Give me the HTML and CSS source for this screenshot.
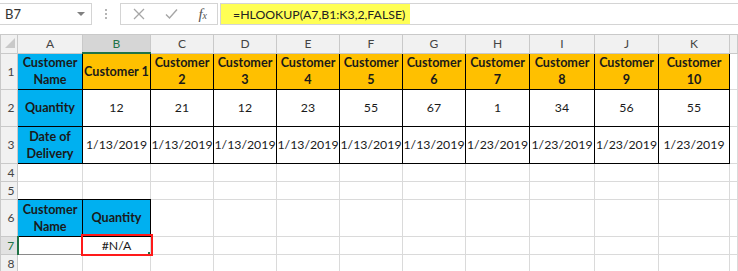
FILE: index.html
```html
<!DOCTYPE html>
<html lang="en">
<head>
    <meta charset="UTF-8">
    <title>HLOOKUP example</title>
    <link rel="stylesheet" href="styles.css">
</head>
<body>

    <div class="toolbar">
        <div class="namebox">
            <span class="ref">B7</span>
            <span class="caret"></span>
        </div>
        <div class="grip"><i></i><i></i><i></i></div>
        <div class="fx-buttons">
            <svg width="12" height="12" viewBox="0 0 12 12"><path d="M1 1L11 11M11 1L1 11" stroke="#a6a6a6" stroke-width="1.3" fill="none"/></svg>
            <svg width="13" height="12" viewBox="0 0 13 12"><path d="M1 6.5L4.5 10L12 1.5" stroke="#a6a6a6" stroke-width="1.4" fill="none"/></svg>
            <span class="fx">f<small>x</small></span>
        </div>
        <div class="formula">
            <span class="highlight">=HLOOKUP(A7,B1:K3,2,FALSE)</span>
        </div>
    </div>

    <table class="sheet">
        <colgroup>
            <col style="width:17px">
            <col style="width:65px">
            <col style="width:68px">
            <col style="width:63px">
            <col style="width:63px">
            <col style="width:63px">
            <col style="width:63px">
            <col style="width:63px">
            <col style="width:64px">
            <col style="width:65px">
            <col style="width:64px">
            <col style="width:71px">
            <col>
        </colgroup>
        <tr class="r-head">
            <th class="corner"><svg width="10" height="10" viewBox="0 0 10 10"><path d="M10 0V10H0Z" fill="#c9c9c9"/></svg></th>
            <th>A</th><th class="sel-col">B</th><th>C</th><th>D</th><th>E</th><th>F</th>
            <th>G</th><th>H</th><th>I</th><th>J</th><th>K</th><th></th>
        </tr>
        <tr class="r-tall">
            <th class="rownum">1</th>
            <td class="b blue bold">Customer<br>Name</td>
            <td class="b gold bold">Customer 1</td>
            <td class="b gold bold">Customer<br>2</td>
            <td class="b gold bold">Customer<br>3</td>
            <td class="b gold bold">Customer<br>4</td>
            <td class="b gold bold">Customer<br>5</td>
            <td class="b gold bold">Customer<br>6</td>
            <td class="b gold bold">Customer<br>7</td>
            <td class="b gold bold">Customer<br>8</td>
            <td class="b gold bold">Customer<br>9</td>
            <td class="b gold bold">Customer<br>10</td>
            <td></td>
        </tr>
        <tr class="r-tall2">
            <th class="rownum">2</th>
            <td class="b blue bold">Quantity</td>
            <td class="b">12</td><td class="b">21</td><td class="b">12</td><td class="b">23</td><td class="b">55</td>
            <td class="b">67</td><td class="b">1</td><td class="b">34</td><td class="b">56</td><td class="b">55</td>
            <td></td>
        </tr>
        <tr class="r-tall2">
            <th class="rownum">3</th>
            <td class="b blue bold">Date of<br>Delivery</td>
            <td class="b">1/13/2019</td><td class="b">1/13/2019</td><td class="b">1/13/2019</td><td class="b">1/13/2019</td><td class="b">1/13/2019</td>
            <td class="b">1/13/2019</td><td class="b">1/23/2019</td><td class="b">1/23/2019</td><td class="b">1/23/2019</td><td class="b">1/23/2019</td>
            <td></td>
        </tr>
        <tr class="r-low">
            <th class="rownum">4</th>
            <td></td><td></td><td></td><td></td><td></td><td></td><td></td><td></td><td></td><td></td><td></td><td></td>
        </tr>
        <tr class="r-low">
            <th class="rownum">5</th>
            <td class="b-under"></td><td class="b-under"></td><td></td><td></td><td></td><td></td><td></td><td></td><td></td><td></td><td></td><td></td>
        </tr>
        <tr class="r-tall2">
            <th class="rownum">6</th>
            <td class="b blue bold">Customer<br>Name</td>
            <td class="b blue bold">Quantity</td>
            <td></td><td></td><td></td><td></td><td></td><td></td><td></td><td></td><td></td><td></td>
        </tr>
        <tr class="r-low">
            <th class="rownum sel-row">7</th>
            <td class="lookup"></td>
            <td class="active">#N/A</td>
            <td></td><td></td><td></td><td></td><td></td><td></td><td></td><td></td><td></td><td></td>
        </tr>
        <tr class="r-low">
            <th class="rownum">8</th>
            <td></td><td></td><td></td><td></td><td></td><td></td><td></td><td></td><td></td><td></td><td></td><td></td>
        </tr>
    </table>

</body>
</html>
```

FILE: styles.css
```css
body {
    margin: 0;
    background: #ffffff;
    font-family: 'Lato', 'Liberation Sans', sans-serif;
    color: #1a1a1a;
    overflow: hidden;
}

/* formula bar */
.toolbar {
    display: flex;
    height: 34px;
    padding-top: 3px;
    box-sizing: border-box;
    background: #ffffff;
}

.namebox {
    width: 92px;
    height: 22px;
    box-sizing: border-box;
    border: 1px solid #d4d4d4;
    border-left: none;
    display: flex;
    align-items: center;
    justify-content: space-between;
    padding: 0 6px 0 5px;
}

.ref {
    font-size: 13px;
    color: #333333;
}

.caret {
    width: 0;
    height: 0;
    border-left: 4px solid transparent;
    border-right: 4px solid transparent;
    border-top: 4px solid #808080;
}

.grip {
    width: 28px;
    display: flex;
    flex-direction: column;
    align-items: center;
    justify-content: center;
    gap: 2px;
    height: 22px;
}

.grip i {
    display: block;
    width: 2px;
    height: 2px;
    background: #b5b5b5;
}

.fx-buttons {
    width: 98px;
    height: 22px;
    box-sizing: border-box;
    border: 1px solid #d4d4d4;
    display: flex;
    align-items: center;
    justify-content: space-between;
    padding: 0 10px 0 12px;
}

.fx {
    font-family: 'Liberation Serif', serif;
    font-style: italic;
    font-size: 15px;
    color: #555555;
}

.fx small {
    font-size: 10px;
}

.formula {
    flex: 1;
    height: 22px;
    margin-left: 2px;
    box-sizing: border-box;
    border: 1px solid #d4d4d4;
    border-right: none;
    display: flex;
    align-items: stretch;
}

.highlight {
    background: #ffff55;
    padding: 0 5px 0 12px;
    font-size: 12.3px;
    line-height: 21px;
    color: #222222;
}

/* grid */
.sheet {
    border-collapse: collapse;
    table-layout: fixed;
    width: 738px;
}

.sheet th,
.sheet td {
    border: 1px solid #dadada;
    padding: 0;
    text-align: center;
    vertical-align: middle;
    white-space: nowrap;
    overflow: hidden;
    font-size: 12.3px;
    line-height: 17px;
    color: #1a1a1a;
}

.sheet th {
    background: #f1f1f1;
    color: #444444;
    font-weight: normal;
    font-size: 12px;
    border-color: #c9c9c9;
}

.r-head { height: 18px; }
.r-tall { height: 36px; }
.r-tall2 { height: 37px; }
.r-low { height: 18px; }

.corner {
    text-align: right;
    vertical-align: bottom;
}

.corner svg {
    display: block;
    margin: 0 2px 2px auto;
}

.rownum {
    text-align: left;
    vertical-align: bottom;
    padding-left: 4px !important;
}

.sel-col {
    background: #d6d6d6 !important;
    color: #217346 !important;
    border-bottom: 2px solid #217346 !important;
}

.sel-row {
    background: #e2e2e2 !important;
    color: #217346 !important;
    border-right: 2px solid #217346 !important;
}

.b {
    border: 1px solid #000000 !important;
}

.b-under {
    border-bottom: 1px solid #000000 !important;
}

.bold {
    font-weight: bold;
    font-size: 12.6px !important;
}

.blue {
    background: #00b0f0;
}

.gold {
    background: #ffc000;
}

.lookup {
    border: 1px solid #8a8a8a !important;
}

.active {
    position: relative;
    outline: 2px solid #ff1a1a;
    outline-offset: 0;
}

.active::after {
    content: "";
    position: absolute;
    right: -1px;
    bottom: -1px;
    width: 3px;
    height: 3px;
    background: #217346;
}
```
